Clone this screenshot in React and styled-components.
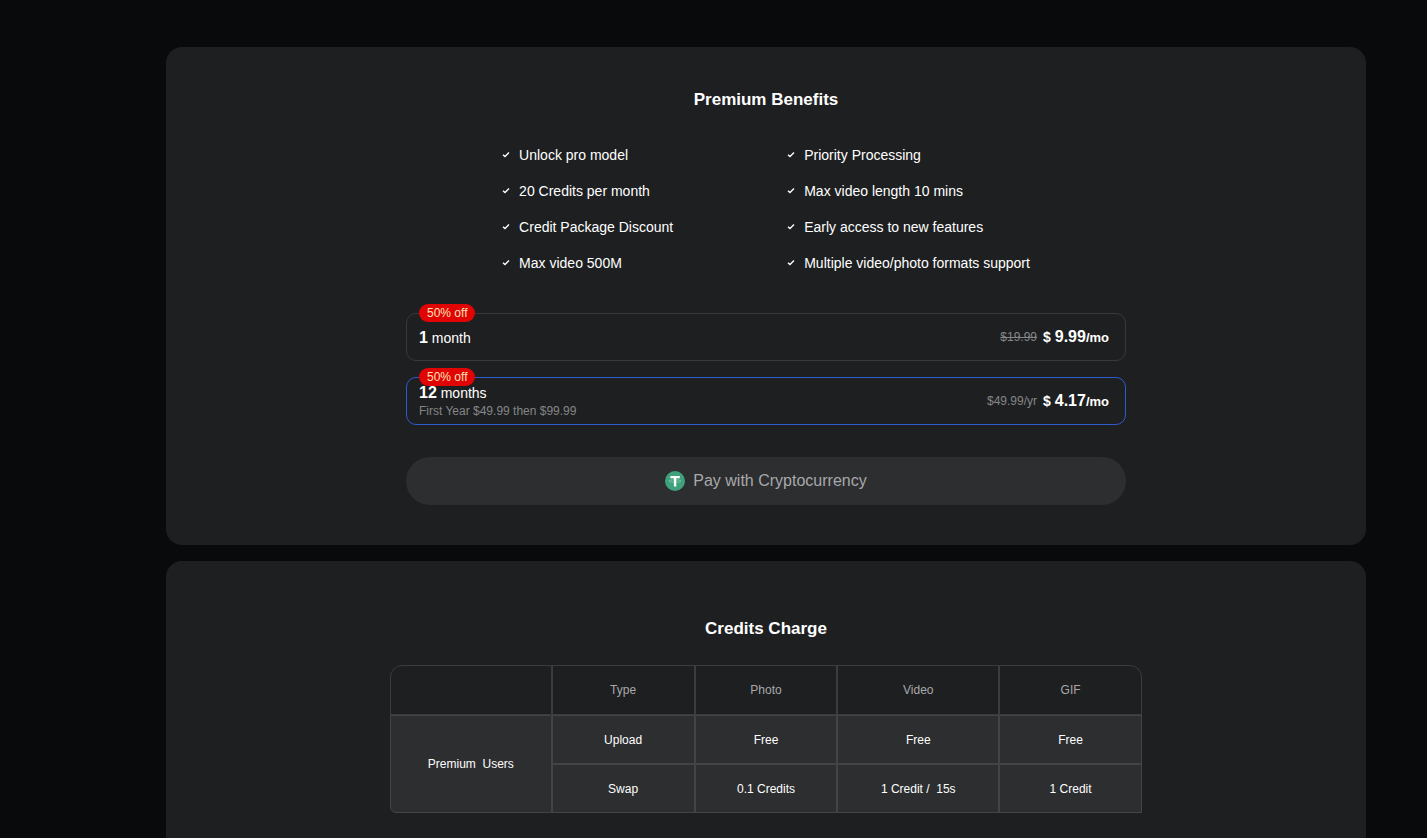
import React, { useState } from "react";
import styled, { createGlobalStyle } from "styled-components";

const benefits = [
  "Unlock pro model",
  "Priority Processing",
  "20 Credits per month",
  "Max video length 10 mins",
  "Credit Package Discount",
  "Early access to new features",
  "Max video 500M",
  "Multiple video/photo formats support",
];

const plans = [
  { id: "month", count: "1", unit: "month", old: "$19.99", struck: true, price: "9.99" },
  {
    id: "year",
    count: "12",
    unit: "months",
    note: "First Year $49.99 then $99.99",
    old: "$49.99/yr",
    price: "4.17",
  },
];

const CheckIcon = () => (
  <svg width="8" height="8" viewBox="0 0 8 8" fill="none" aria-hidden="true">
    <path d="M1 3.7 L3 5.6 L7 1.6" stroke="#fff" strokeWidth="1.4" />
  </svg>
);

const TetherIcon = () => (
  <svg width="20" height="20" viewBox="0 0 20 20" fill="none" aria-hidden="true">
    <circle cx="10" cy="10" r="10" fill="#3fa27c" />
    <ellipse cx="10" cy="10" rx="6" ry="1.2" stroke="#a9d8c6" strokeWidth="0.5" />
    <path d="M5.4 5h9.4v2.2h-3.5V15.6H8.9V7.2H5.4z" fill="#fff" />
  </svg>
);

const App = () => {
  const [plan, setPlan] = useState("year");

  return (
    <Page>
      <GlobalStyle />
      <BenefitsCard>
        <Title>Premium Benefits</Title>
        <Benefits>
          {benefits.map((text) => (
            <Benefit key={text}>
              <CheckIcon />
              {text}
            </Benefit>
          ))}
        </Benefits>
        <Plans>
          {plans.map((item) => (
            <Plan key={item.id} $active={plan === item.id}>
              <PlanRadio
                type="radio"
                name="plan"
                value={item.id}
                checked={plan === item.id}
                onChange={() => setPlan(item.id)}
              />
              <Badge>50% off</Badge>
              <Period>
                <span>
                  <b>{item.count}</b> {item.unit}
                </span>
                {item.note && <Note>{item.note}</Note>}
              </Period>
              <Price>
                <OldPrice $struck={item.struck}>{item.old}</OldPrice>
                <span>
                  $ <Amount>{item.price}</Amount>
                  <Per>/mo</Per>
                </span>
              </Price>
            </Plan>
          ))}
        </Plans>
        <PayButton type="button">
          <TetherIcon />
          Pay with Cryptocurrency
        </PayButton>
      </BenefitsCard>

      <CreditsCard>
        <Title>Credits Charge</Title>
        <Table>
          <colgroup>
            <Col $wide />
            <Col />
            <Col />
            <Col $wide />
            <Col />
          </colgroup>
          <thead>
            <tr>
              <HeadCell as="td" />
              <HeadCell>Type</HeadCell>
              <HeadCell>Photo</HeadCell>
              <HeadCell>Video</HeadCell>
              <HeadCell>GIF</HeadCell>
            </tr>
          </thead>
          <tbody>
            <tr>
              <UserCell rowSpan={2}>Premium&nbsp; Users</UserCell>
              <Cell>Upload</Cell>
              <Cell>Free</Cell>
              <Cell>Free</Cell>
              <Cell>Free</Cell>
            </tr>
            <tr>
              <Cell>Swap</Cell>
              <Cell>0.1 Credits</Cell>
              <Cell>1 Credit /&nbsp; 15s</Cell>
              <Cell>1 Credit</Cell>
            </tr>
          </tbody>
        </Table>
      </CreditsCard>
    </Page>
  );
};

export default App;

const GlobalStyle = createGlobalStyle`
  * {
    box-sizing: border-box;
  }
  body {
    margin: 0;
    background: #090a0c;
    color: #fff;
    font-family: "Liberation Sans", Arial, sans-serif;
    font-size: 14px;
  }
`;

const Page = styled.main`
  display: flex;
  flex-direction: column;
  gap: 16px;
  padding: 47px 61px 0 166px;
  @media (max-width: 840px) {
    padding: 24px 16px;
  }
`;

const Card = styled.section`
  display: flex;
  flex-direction: column;
  align-items: center;
  background: #1e1f21;
  border-radius: 16px;
`;

const BenefitsCard = styled(Card)`
  padding: 41px 20% 40px;
  @media (max-width: 840px) {
    padding: 40px 16px;
  }
`;

const CreditsCard = styled(Card)`
  padding: 56px 224px;
  @media (max-width: 840px) {
    padding: 40px 16px;
  }
`;

const Title = styled.h2`
  margin: 0;
  font-size: 17px;
  line-height: 24px;
  font-weight: 700;
`;

const Benefits = styled.ul`
  display: grid;
  grid-template-columns: auto auto;
  gap: 16px 114px;
  margin: 33px 0 40px;
  padding: 0;
  list-style: none;
  @media (max-width: 840px) {
    grid-template-columns: auto;
  }
`;

const Benefit = styled.li`
  display: flex;
  align-items: center;
  gap: 9px;
  line-height: 20px;
`;

const Plans = styled.div`
  display: flex;
  flex-direction: column;
  gap: 16px;
  width: 100%;
`;

const Plan = styled.label`
  position: relative;
  display: flex;
  align-items: center;
  justify-content: space-between;
  min-height: 48px;
  padding: 0 16px 0 12px;
  border: 1px solid ${({ $active }) => ($active ? "#2f5bd0" : "#37393b")};
  border-radius: 10px;
  cursor: pointer;
`;

const PlanRadio = styled.input`
  position: absolute;
  inset: 0;
  margin: 0;
  opacity: 0;
  cursor: pointer;
`;

const Badge = styled.span`
  position: absolute;
  top: -10px;
  left: 12px;
  padding: 0 8px;
  border-radius: 9px;
  background: #e00404;
  color: #ffe2b4;
  font-size: 12px;
  line-height: 18px;
`;

const Period = styled.span`
  display: flex;
  flex-direction: column;
  padding-top: 2px;
  line-height: 18px;
  b {
    font-size: 16px;
  }
`;

const Note = styled.span`
  color: #858687;
  font-size: 12px;
`;

const Price = styled.span`
  display: flex;
  align-items: center;
  gap: 6px;
  font-weight: 700;
`;

const OldPrice = styled.span`
  color: #858687;
  font-size: 12px;
  font-weight: 400;
  text-decoration: ${({ $struck }) => ($struck ? "line-through" : "none")};
`;

const Amount = styled.span`
  font-size: 16px;
`;

const Per = styled.span`
  font-size: 13px;
`;

const PayButton = styled.button`
  display: flex;
  align-items: center;
  justify-content: center;
  gap: 8px;
  width: 100%;
  height: 48px;
  margin-top: 32px;
  border: none;
  border-radius: 24px;
  background: #2d2e30;
  color: #a8a9aa;
  font-family: inherit;
  font-size: 16px;
  cursor: pointer;
`;

const Table = styled.table`
  width: 100%;
  margin-top: 24px;
  table-layout: fixed;
  border-collapse: separate;
  border-spacing: 0;
  font-size: 12px;
  text-align: center;
`;

const Col = styled.col`
  width: ${({ $wide }) => ($wide ? "21.5%" : "19%")};
`;

const Cell = styled.td`
  height: 49px;
  padding: 0;
  border: 1px solid #434446;
  background: #2d2e30;
`;

const UserCell = styled(Cell)`
  border-bottom-left-radius: 6px;
`;

const HeadCell = styled.th`
  height: 50px;
  padding: 0;
  border: 1px solid #3b3c3e;
  background: #1e1f21;
  color: #a8a9aa;
  font-weight: 400;
  &:first-child {
    border-top-left-radius: 12px;
  }
  &:last-child {
    border-top-right-radius: 12px;
  }
`;
